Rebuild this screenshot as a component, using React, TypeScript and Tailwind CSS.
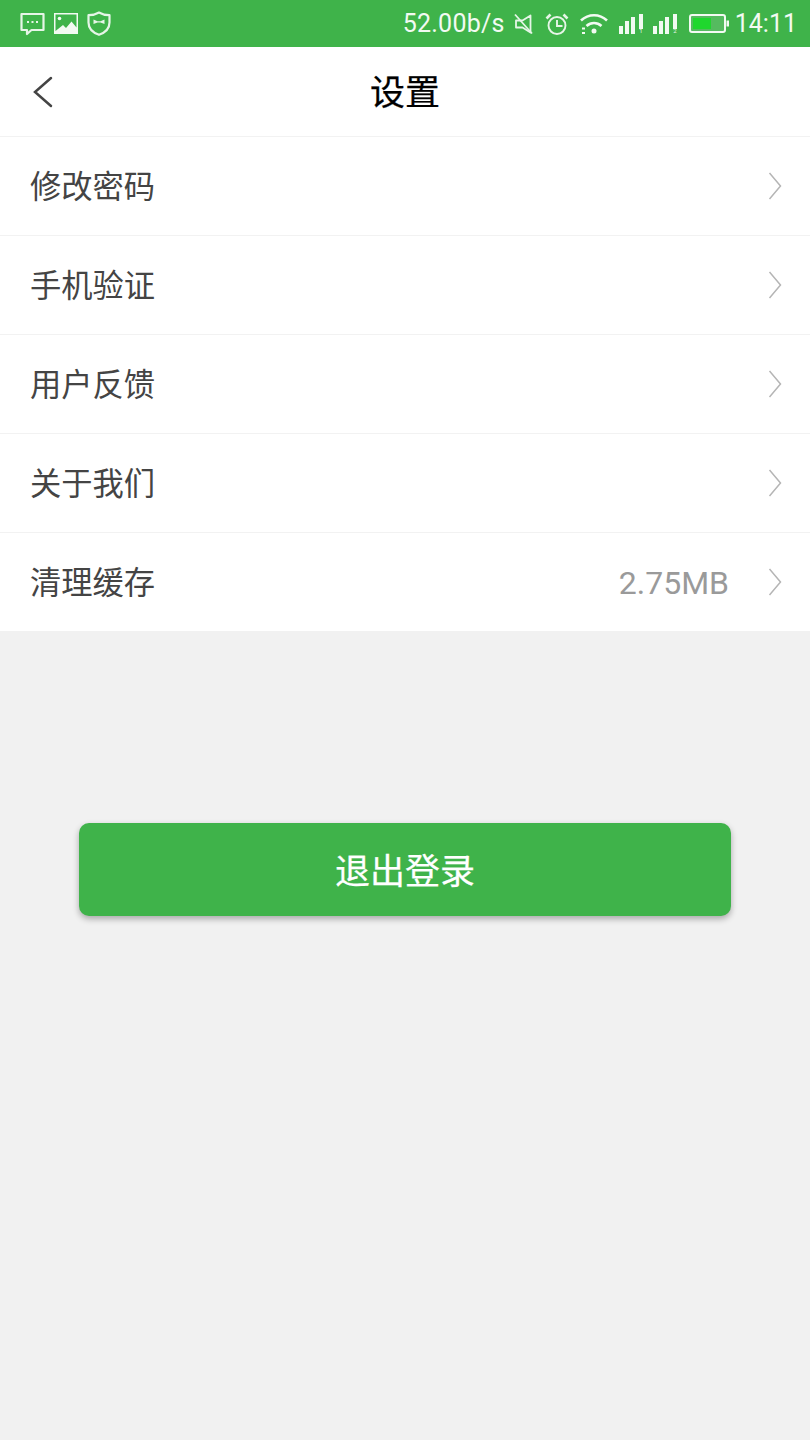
import React from 'react';

const rows = [
  { label: '修改密码' },
  { label: '手机验证' },
  { label: '用户反馈' },
  { label: '关于我们' },
  { label: '清理缓存', value: '2.75MB' },
];

const cjk = { fontFamily: '"Noto Sans CJK SC", sans-serif' };
const roboto = { fontFamily: 'Roboto, sans-serif' };

function MessageIcon() {
  return (
    <svg width="25" height="24" viewBox="0 0 25 24" fill="none" stroke="#e6f5e7" strokeWidth="2.200">
      <path d="M1.500 2h22v16H11.500l-4.500 4v-4H1.500z" strokeLinejoin="round" />
      <path d="M7 10h2M11.500 10h2M16 10h2" strokeWidth="1.800" />
    </svg>
  );
}

function ImageIcon() {
  return (
    <svg width="24" height="21" viewBox="0 0 24 21">
      <rect x="0" y="0" width="24" height="21" fill="#f2faf2" />
      <path d="M1.500 1.500h21v13l-5-6-5.500 6.500-3-3-7.500 6z" fill="#3fb34a" />
      <circle cx="5.500" cy="5.500" r="1.800" fill="#f2faf2" />
    </svg>
  );
}

function ShieldIcon() {
  return (
    <svg width="24" height="25" viewBox="0 0 24 25" fill="none" stroke="#e6f5e7" strokeWidth="2.200">
      <path d="M12 1.500c3 1.800 6 2.700 10.500 2.700v7.300c0 6-4 10-10.500 12.300C5.500 21.500 1.500 17.500 1.500 11.500V4.200C6 4.200 9 3.300 12 1.500z" strokeLinejoin="round" />
      <path d="M6.500 8.500l4 1.700h3l4-1.700v4.500l-4-1.500h-3l-4 1.500z" fill="#e6f5e7" stroke="none" />
    </svg>
  );
}

function MuteIcon() {
  return (
    <svg width="20" height="22" viewBox="0 0 20 22" fill="none" stroke="#e6f5e7" strokeWidth="1.800">
      <path d="M1 1.500l17 19" />
      <path d="M16.500 2.500L8.500 7.500H2v7h6.500l8 5z" strokeLinejoin="round" />
    </svg>
  );
}

function AlarmIcon() {
  return (
    <svg width="24" height="22" viewBox="0 0 24 22" fill="none" stroke="#e6f5e7" strokeWidth="1.900">
      <circle cx="12" cy="12.500" r="8.500" />
      <path d="M12 7v6h5.500" />
      <path d="M1.500 5.500l4-4M22.500 5.500l-4-4" strokeWidth="2.600" />
    </svg>
  );
}

function WifiIcon() {
  return (
    <svg width="28" height="22" viewBox="0 0 28 22" fill="none" stroke="#f2faf2" strokeWidth="2.600">
      <path d="M1 7.500c7.500-7 18.500-7 26 0" />
      <path d="M6.500 13c4.500-4 10.500-4 15 0" />
      <circle cx="14" cy="18" r="2.500" fill="#f2faf2" stroke="none" />
      <path d="M2 15.500h3M2 20h3" strokeWidth="1.800" />
    </svg>
  );
}

function SignalIcon({ sim }: { sim: string }) {
  return (
    <div className="relative h-[20px] w-[25px] shrink-0">
      <svg width="25" height="20" viewBox="0 0 25 20" fill="#f2faf2">
        <rect x="0" y="12" width="4" height="8" />
        <rect x="6" y="7" width="4" height="13" />
        <rect x="12" y="3" width="4" height="17" />
        <rect x="20" y="0" width="4" height="15" />
      </svg>
      <span className="absolute right-[1px] bottom-0 text-[6px] leading-none text-[#e6f5e7]" style={roboto}>{sim}</span>
    </div>
  );
}

function BatteryIcon() {
  return (
    <svg width="40" height="19" viewBox="0 0 40 19">
      <rect x="1" y="1" width="35" height="17" rx="2" fill="#55bb5f" stroke="#f2faf2" strokeWidth="2" />
      <rect x="4" y="4" width="18" height="11" fill="#1fd72e" />
      <rect x="37.500" y="6.500" width="2.500" height="6" fill="#f2faf2" />
    </svg>
  );
}

function Chevron({ className }: { className: string }) {
  return (
    <svg className={className} viewBox="0 0 14 30" fill="none" strokeWidth="1.500">
      <path d="M1.500 2l11 13-11 13" />
    </svg>
  );
}

export default function App() {
  return (
    <div className="flex h-[1440px] w-[810px] flex-col bg-[#f1f1f1]" style={cjk}>
      {/* status bar */}
      <div className="flex h-[47px] items-center justify-between bg-[#3fb34a] pr-[13px] pl-[20px]">
        <div className="flex items-center gap-[9px]">
          <MessageIcon />
          <ImageIcon />
          <ShieldIcon />
        </div>
        <div className="flex items-center text-[#f2faf2]" style={roboto}>
          <span className="text-[25px] leading-none tracking-[0.25px]">52.00b/s</span>
          <div className="ml-[9px] flex items-center gap-[11px]">
            <MuteIcon />
            <AlarmIcon />
            <WifiIcon />
          </div>
          <div className="ml-[11px] flex items-center gap-[9px]">
            <SignalIcon sim="1" />
            <SignalIcon sim="2" />
          </div>
          <div className="ml-[11px]"><BatteryIcon /></div>
          <span className="ml-[6px] text-[25px] leading-none">14:11</span>
        </div>
      </div>

      {/* title bar */}
      <div className="relative flex h-[90px] items-center justify-center border-b border-[#f2f2f2] bg-white">
        <svg className="absolute left-[33px] top-[29px] h-[32px] w-[20px]" viewBox="0 0 20 32" fill="none" stroke="#444444" strokeWidth="2.500" strokeLinecap="round">
          <path d="M18 2L2 16l16 14" />
        </svg>
        <span className="mb-[3px] text-[35px] text-black [-webkit-text-stroke:0.25px_black]">设置</span>
      </div>

      {/* menu rows */}
      <div className="bg-white">
        {rows.map((row, i) => (
          <div key={row.label} className={`flex items-center pr-[28px] pl-[30px] ${i < rows.length - 1 ? 'h-[99px] border-b border-[#f2f2f2]' : 'h-[98px]'}`}>
            <span className="mb-[2px] flex-1 text-[31.25px] text-[#444444]">{row.label}</span>
            {row.value && <span className="mt-[1px] mr-[39px] text-[32px] text-[#9a9a9a]" style={roboto}>{row.value}</span>}
            <Chevron className="h-[30px] w-[14px] stroke-[#b5b5b5]" />
          </div>
        ))}
      </div>

      {/* logout */}
      <div className="mt-[192px] px-[79px]">
        <button className="h-[93px] w-full rounded-[10px] bg-[#3fb34a] text-[35px] text-white shadow-[0_3px_6px_rgba(0,0,0,0.3)] [-webkit-text-stroke:0.25px_white]">
          退出登录
        </button>
      </div>
    </div>
  );
}
